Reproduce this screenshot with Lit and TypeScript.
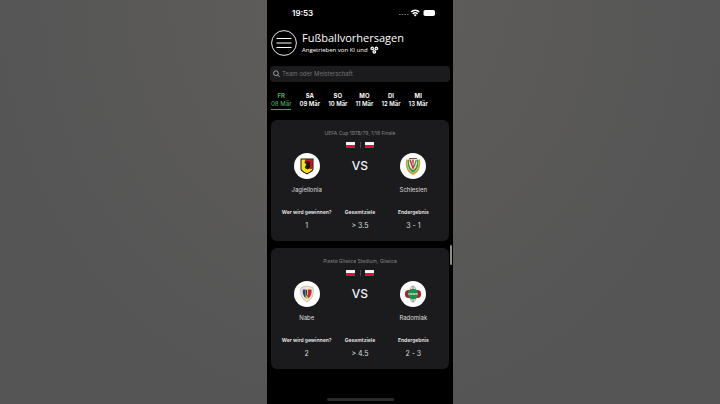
import { LitElement, html, css, svg, TemplateResult } from "lit";
import { customElement, property, state } from "lit/decorators.js";
import { classMap } from "lit/directives/class-map.js";

type CrestName = "jagiellonia" | "schlesien" | "nabe" | "radomiak";

interface Team {
  name: string;
  crest: CrestName;
}

interface Match {
  league: string;
  home: Team;
  away: Team;
  winner: string;
  goals: string;
  score: string;
}

const days = [
  ["FR", "08 Mär"],
  ["SA", "09 Mär"],
  ["SO", "10 Mär"],
  ["MO", "11 Mär"],
  ["DI", "12 Mär"],
  ["MI", "13 Mär"],
];

const matches: Match[] = [
  {
    league: "UEFA Cup 1978/79, 1/16 Finale",
    home: { name: "Jagiellonia", crest: "jagiellonia" },
    away: { name: "Schlesien", crest: "schlesien" },
    winner: "1",
    goals: "> 3.5",
    score: "3 - 1",
  },
  {
    league: "Piasta Gliwice Stadium, Gliwice",
    home: { name: "Nabe", crest: "nabe" },
    away: { name: "Radomiak", crest: "radomiak" },
    winner: "2",
    goals: "> 4.5",
    score: "2 - 3",
  },
];

// Club crests, drawn on a 26 x 26 badge.
const crests: Record<CrestName, TemplateResult> = {
  jagiellonia: svg`
    <path d="M6.500 5.500h13v10.500c0 2-3 3.500-6.500 5.500-3.500-2-6.500-3.500-6.500-5.500z" fill="#1c1508"/>
    <path d="M7.500 6.500h4l-1 3.500 2 1-1.500 3 3 1.500 4.500-.5v1c0 1.500-2.700 2.700-5.500 4.300-2.800-1.600-5.500-2.800-5.500-4.300z" fill="#f6e21c"/>
    <path d="M11 6.200h7.800v9.300l-2.800.8-1-1.800V10l-4-.5z" fill="#c41425"/>
    <path d="M11 9h4.500v5l-1.700 1.800-2.800-1.300" fill="none" stroke="#1c1508" stroke-width="1.200"/>`,
  schlesien: svg`
    <path d="M7 6.500C5.500 13.500 8 19 13 20.800c5-1.800 7.500-7.300 6-14.300" fill="none" stroke="#c5a52c" stroke-width="1.800"/>
    <path d="M8 6.500C7 13 9 17.700 13 19.500c4-1.800 6-6.500 5-13z" fill="#2f9a48"/>
    <path d="M9 6h8c.5 4.500-.5 9-4 11.200C9.500 15 8.500 10.500 9 6z" fill="#f1e9df"/>
    <path d="M9.800 6.500 13 15l1.500-4M13 6.500v4" fill="none" stroke="#c4303a" stroke-width="1.400"/>
    <path d="M16.300 7 14 14" fill="none" stroke="#4d9350" stroke-width="1.200"/>
    <path d="M9 5.500h8" stroke="#6c5550"/>`,
  nabe: svg`
    <path d="M7 6.500Q13 3.500 19 6.500q1.200 8-2.500 11.800L13 21l-3.500-2.700Q5.800 14.500 7 6.500z" fill="#eee4d4" stroke="#c9b79f" stroke-width=".8"/>
    <path d="M8.800 8.500H12v8.800c-2.700-1.800-3.700-5.300-3.200-8.800z" fill="#23408c"/>
    <path d="M14 8.500h3.500c.5 3.700-.5 7.200-3.500 9z" fill="#ce2437"/>
    <path d="M11.500 8.500h2.500v9l-1 .8-1.500-1z" fill="#d8c554"/>
    <path d="M12.500 9v4.500l1.200 2" fill="none" stroke="#263154"/>`,
  radomiak: svg`
    <ellipse cx="13" cy="13" rx="3.500" ry="8.200" fill="#fff" stroke="#8b9590" stroke-width=".8"/>
    <rect x="5" y="9" width="16" height="8" rx="3.500" fill="#b81d2d"/>
    <ellipse cx="13" cy="13" rx="5" ry="5.500" fill="#16934c"/>
    <path d="M8.500 12h9v2h-9z" fill="#b9d8c4"/>
    <path d="M9 13h8" stroke="#45795a" stroke-width=".8" stroke-dasharray="1 .5"/>
    <path d="M13 5.500v2M13 18.500v2" stroke="#666"/>`,
};

@customElement("match-card")
class MatchCard extends LitElement {
  @property({ attribute: false }) match!: Match;

  static styles = css`
    :host {
      display: block;
    }
    .card {
      display: flex;
      flex-direction: column;
      align-items: center;
      padding: 9px 9px 10px;
      border-radius: 6px;
      background: #1b1b1d;
      color: #dededf;
    }
    .league {
      margin: 0;
      font-size: 5px;
      line-height: 8px;
      font-weight: 400;
      color: #838385;
    }
    .flags {
      display: flex;
      align-items: center;
      justify-content: space-between;
      width: 28px;
      height: 6px;
      margin: 5px 0;
    }
    .flag {
      width: 9px;
      height: 6px;
      background: linear-gradient(#f4f4f4 50%, #d0173b 50%);
    }
    .divider {
      width: 1px;
      height: 6px;
      background: #4a4a4c;
    }
    .columns {
      display: grid;
      grid-template-columns: repeat(3, 1fr);
      width: 100%;
      justify-items: center;
      text-align: center;
    }
    .team {
      display: flex;
      flex-direction: column;
      align-items: center;
      gap: 7px;
      font-size: 6px;
      line-height: 8px;
    }
    .crest {
      display: block;
      width: 26px;
      height: 26px;
      border-radius: 50%;
      background: #fff;
    }
    .versus {
      font-size: 12px;
      line-height: 26px;
      font-weight: 500;
      color: #f2f2f2;
    }
    .tips {
      margin: 14px 0 0;
    }
    .tip {
      display: flex;
      flex-direction: column;
      align-items: center;
      gap: 5px;
      white-space: nowrap;
    }
    .label {
      font-size: 5px;
      line-height: 8px;
      font-weight: 700;
    }
    .value {
      margin: 0;
      font-size: 7px;
      line-height: 10px;
    }
  `;

  private team(team: Team) {
    return html`<div class="team">
      <svg class="crest" viewBox="0 0 26 26" aria-hidden="true">${crests[team.crest]}</svg>
      <span>${team.name}</span>
    </div>`;
  }

  private tip(label: string, value: string) {
    return html`<div class="tip">
      <dt class="label">${label}</dt>
      <dd class="value">${value}</dd>
    </div>`;
  }

  render() {
    const m = this.match;
    return html`<article class="card">
      <h2 class="league">${m.league}</h2>
      <div class="flags">
        <span class="flag"></span><span class="divider"></span><span class="flag"></span>
      </div>
      <div class="columns">
        ${this.team(m.home)}
        <span class="versus">VS</span>
        ${this.team(m.away)}
      </div>
      <dl class="columns tips">
        ${this.tip("Wer wird gewinnen?", m.winner)}
        ${this.tip("Gesamtziele", m.goals)}
        ${this.tip("Endergebnis", m.score)}
      </dl>
    </article>`;
  }
}

@customElement("app-root")
class AppRoot extends LitElement {
  @state() private day = 0;

  static styles = css`
    :host {
      display: flex;
      justify-content: center;
      min-height: 100vh;
      background: radial-gradient(ellipse at 50% 0, #605e5c, #555 75%);
      font-family: Inter, "Liberation Sans", sans-serif;
    }
    button {
      padding: 0;
      border: 0;
      background: none;
      color: inherit;
      font: inherit;
      cursor: pointer;
    }
    .phone {
      position: relative;
      display: flex;
      flex-direction: column;
      width: 100%;
      max-width: 186px;
      background: #000;
      color: #fff;
    }
    .status {
      display: flex;
      align-items: center;
      justify-content: space-between;
      height: 25px;
      padding: 0 16px 0 25px;
      font-size: 8px;
      font-weight: 600;
    }
    .signals {
      width: 39px;
      height: 8px;
    }
    .header {
      display: flex;
      align-items: center;
      gap: 5px;
      padding: 5px 4px 0;
      font-family: "Open Sans", "Noto Sans", sans-serif;
    }
    .menu {
      flex: none;
      width: 26px;
      height: 26px;
    }
    .menu-icon {
      display: block;
      width: 26px;
      height: 26px;
    }
    .title {
      margin: 0;
      font-size: 11px;
      line-height: 15px;
      font-weight: 400;
    }
    .subtitle {
      display: flex;
      align-items: center;
      gap: 2px;
      margin: 0;
      font-size: 6px;
      line-height: 11px;
    }
    .balls {
      width: 9px;
      height: 9px;
    }
    .search {
      display: flex;
      align-items: center;
      gap: 2px;
      height: 16px;
      margin: 10px 3px 0;
      padding: 0 3px;
      border-radius: 4px;
      background: #1b1b1d;
    }
    .search-icon {
      flex: none;
      width: 7px;
      height: 8px;
    }
    .search-input {
      flex: 1;
      min-width: 0;
      padding: 0;
      border: 0;
      outline: 0;
      background: none;
      color: #fff;
      font: 6px/10px Inter, "Liberation Sans", sans-serif;
    }
    .search-input::placeholder {
      color: #727274;
    }
    .days {
      display: flex;
      gap: 8px;
      margin: 10px 4px 0;
    }
    .day {
      display: flex;
      flex-direction: column;
      align-items: center;
      padding-bottom: 1px;
      border-bottom: 1px solid transparent;
      font-size: 6px;
      line-height: 8px;
      font-weight: 600;
      white-space: nowrap;
    }
    .weekday {
      font-weight: 700;
    }
    .active {
      color: #4aa657;
      border-color: #4aa657;
      font-weight: 500;
    }
    .matches {
      display: flex;
      flex-direction: column;
      gap: 7px;
      padding: 10px 4px 0;
    }
    .home-bar {
      width: 67px;
      height: 3px;
      margin: auto auto 3px;
      border-radius: 2px;
      background: #2b2b2b;
    }
    .scroll-thumb {
      position: absolute;
      top: 245px;
      right: 1px;
      width: 2px;
      height: 20px;
      border-radius: 1px;
      background: #8c8c8c;
    }
  `;

  render() {
    return html`<main class="phone">
      <div class="status">
        <span>19:53</span>
        <svg class="signals" viewBox="0 0 39 8" fill="#fff" aria-hidden="true">
          <path d="M1 5.500h10" stroke="#777" stroke-dasharray="1.500 1.200" />
          <path d="M13.200 2.900a6 6 0 0 1 8 0M14.700 4.800a4 4 0 0 1 5 0" fill="none" stroke="#fff" stroke-width="1.500" />
          <path d="M15.700 6a2.300 2.300 0 0 1 3 0L17.200 7.600z" />
          <rect x="25.500" y="1" width="11.500" height="6" rx="1.800" />
          <path d="M38 3v2q.8-1 0-2z" fill="#777" />
        </svg>
      </div>
      <header class="header">
        <button class="menu" aria-label="Menü">
          <svg class="menu-icon" viewBox="0 0 26 26" fill="none" stroke="#fff" aria-hidden="true">
            <circle cx="13" cy="13" r="12.400" stroke-width=".9" />
            <path d="M5.500 8.500h15M5.500 13h15M5.500 17.500h15" stroke-width="1" />
          </svg>
        </button>
        <div>
          <h1 class="title">Fußballvorhersagen</h1>
          <p class="subtitle">
            Angetrieben von KI und
            <svg class="balls" viewBox="0 0 9 9" aria-hidden="true">
              <g fill="#fff">
                <circle cx="2.300" cy="2.400" r="1.900" />
                <circle cx="6.300" cy="2.400" r="1.900" />
                <circle cx="4.300" cy="5.800" r="1.900" />
              </g>
              <g fill="#111">
                <circle cx="2.300" cy="2.400" r=".6" />
                <circle cx="6.300" cy="2.400" r=".6" />
                <circle cx="4.300" cy="5.800" r=".6" />
                <path d="M3.800.8h1v1.400h-1zM1.200 3.800h1v1h-1zM6.500 3.800h1v1h-1z" />
              </g>
            </svg>
          </p>
        </div>
      </header>
      <label class="search">
        <svg class="search-icon" viewBox="0 0 7 8" fill="none" stroke="#aaa" stroke-width=".9" aria-hidden="true">
          <circle cx="2.900" cy="3.200" r="2.400" />
          <path d="M4.600 4.900 6.700 7" />
        </svg>
        <input class="search-input" type="text" placeholder="Team oder Meisterschaft" aria-label="Team oder Meisterschaft" />
      </label>
      <nav class="days">
        ${days.map(
          ([weekday, date], i) => html`<button
            class=${classMap({ day: true, active: i === this.day })}
            @click=${() => (this.day = i)}
          >
            <span class="weekday">${weekday}</span>
            <span>${date}</span>
          </button>`
        )}
      </nav>
      <section class="matches">
        ${matches.map((m) => html`<match-card .match=${m}></match-card>`)}
      </section>
      <div class="home-bar"></div>
      <div class="scroll-thumb"></div>
    </main>`;
  }
}
